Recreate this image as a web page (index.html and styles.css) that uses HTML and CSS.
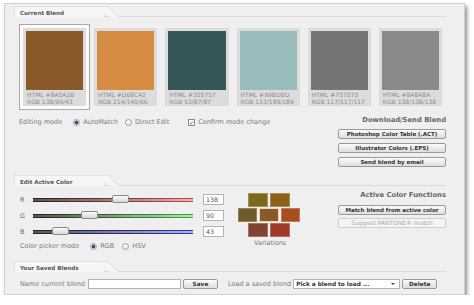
FILE: index.html
```html
<!DOCTYPE html>
<html lang="en">
<head>
    <meta charset="UTF-8">
    <title>Color Blender</title>
    <link rel="stylesheet" href="styles.css">
</head>
<body>
    <div class="panel">
        <section class="sec">
            <div class="tab-head"><span class="tab">Current Blend</span></div>
            <div class="swatches">
                <div class="card active"><div class="card-in"><div class="chip" style="background:#8A5A2B"></div><p>HTML #8A5A2B<br>RGB 138/90/43</p></div></div>
                <div class="card"><div class="card-in"><div class="chip" style="background:#D68C42"></div><p>HTML #D68C42<br>RGB 214/140/66</p></div></div>
                <div class="card"><div class="card-in"><div class="chip" style="background:#355757"></div><p>HTML #355757<br>RGB 53/87/87</p></div></div>
                <div class="card"><div class="card-in"><div class="chip" style="background:#99BDBD"></div><p>HTML #99BDBD<br>RGB 153/189/189</p></div></div>
                <div class="card"><div class="card-in"><div class="chip" style="background:#757575"></div><p>HTML #757575<br>RGB 117/117/117</p></div></div>
                <div class="card"><div class="card-in"><div class="chip" style="background:#8A8A8A"></div><p>HTML #8A8A8A<br>RGB 138/138/138</p></div></div>
            </div>
            <div class="mid">
                <div class="opt-row mode-row">
                    <span class="opt-label">Editing mode</span>
                    <label class="opt"><span class="radio on"></span>AutoMatch</label>
                    <label class="opt"><span class="radio"></span>Direct Edit</label>
                    <label class="opt confirm"><span class="check">&#10003;</span>Confirm mode change</label>
                </div>
                <div class="side">
                    <h4>Download/Send Blend</h4>
                    <button class="btn">Photoshop Color Table (.ACT)</button>
                    <button class="btn">Illustrator Colors (.EPS)</button>
                    <button class="btn">Send blend by email</button>
                </div>
            </div>
        </section>

        <section class="sec sec-edit">
            <div class="tab-head"><span class="tab">Edit Active Color</span></div>
            <div class="edit">
                <div class="sliders">
                    <div class="slider-row">
                        <span class="ch">R</span>
                        <div class="track track-r"><span class="thumb" style="left:79px"></span></div>
                        <input class="num" type="text" value="138">
                    </div>
                    <div class="slider-row">
                        <span class="ch">G</span>
                        <div class="track track-g"><span class="thumb" style="left:48px"></span></div>
                        <input class="num" type="text" value="90">
                    </div>
                    <div class="slider-row">
                        <span class="ch">B</span>
                        <div class="track track-b"><span class="thumb" style="left:19px"></span></div>
                        <input class="num" type="text" value="43">
                    </div>
                    <div class="opt-row picker-row">
                        <span class="opt-label">Color picker mode</span>
                        <label class="opt"><span class="radio on"></span>RGB</label>
                        <label class="opt"><span class="radio"></span>HSV</label>
                    </div>
                </div>
                <div class="variations">
                    <div class="var-row">
                        <span class="var" style="background:#7d6b1c"></span>
                        <span class="var" style="background:#8d631c"></span>
                    </div>
                    <div class="var-row">
                        <span class="var" style="background:#6f5a2a"></span>
                        <span class="var current" style="background:#8a5a2b"></span>
                        <span class="var" style="background:#a84d1f"></span>
                    </div>
                    <div class="var-row">
                        <span class="var" style="background:#7e4431"></span>
                        <span class="var" style="background:#9e3b28"></span>
                    </div>
                    <div class="var-label">Variations</div>
                </div>
                <div class="side side-edit">
                    <h4>Active Color Functions</h4>
                    <button class="btn">Match blend from active color</button>
                    <button class="btn" disabled>Suggest PANTONE&reg; match</button>
                </div>
            </div>
        </section>

        <section class="sec sec-saved">
            <div class="tab-head"><span class="tab">Your Saved Blends</span></div>
            <div class="saved-row">
                <span class="opt-label">Name current blend</span>
                <input class="name-input" type="text">
                <button class="btn btn-small">Save</button>
                <span class="opt-label load-label">Load a saved blend</span>
                <div class="pick">Pick a blend to load ...<span class="arrow"></span></div>
                <button class="btn btn-small">Delete</button>
            </div>
        </section>
    </div>
</body>
</html>
```

FILE: styles.css
```css
body {
    margin: 0;
    background-color: #ffffff;
    font-family: "DejaVu Sans", Verdana, sans-serif;
    font-size: 6.5px;
    color: #7a7a7a;
}
.panel {
    box-sizing: border-box;
    width: 461px;
    height: 292px;
    margin: 3px 0 0 4px;
    padding: 2px 18px 0 9px;
    background-color: #efefef;
    border: 1px solid #d2d2d2;
    box-shadow: 2px 3px 4px rgba(0, 0, 0, 0.45);
}

/* section tabs */
.tab-head {
    height: 10px;
    border-bottom: 1px solid #dadada;
}
.tab {
    position: relative;
    display: inline-block;
    box-sizing: border-box;
    width: 90px;
    height: 11px;
    padding: 3px 0 0 5px;
    background-color: #f6f6f6;
    border-top: 1px solid #e0e0e0;
    border-left: 1px solid #e4e4e4;
    font-size: 5.6px;
    font-weight: bold;
    line-height: 6px;
    color: #555;
}
.tab::after {
    content: "";
    position: absolute;
    left: 84px;
    top: -1px;
    width: 8px;
    height: 10px;
    background-color: #f6f6f6;
    border-top: 1px solid #e0e0e0;
    border-right: 1px solid #dadada;
    transform: skewX(45deg);
    transform-origin: top left;
}

/* current blend */
.swatches {
    display: flex;
    margin: 7px 0 0 5px;
}
.card {
    box-sizing: border-box;
    width: 72px;
    height: 86px;
    padding: 3px;
    border: 1px solid transparent;
}
.card.active {
    border-color: #a8a8a8;
    background-color: #fbfbfb;
}
.card-in {
    box-sizing: border-box;
    height: 100%;
    padding: 3px;
    background-color: #dcdcdc;
}
.chip {
    height: 59px;
}
.card-in p {
    margin: 1px 0 0 1px;
    font-size: 6px;
    line-height: 7px;
    color: #8c8c8c;
    white-space: nowrap;
}

.mid {
    display: flex;
    justify-content: space-between;
    height: 61px;
    margin-left: 5px;
}
.opt-row {
    display: flex;
    align-items: center;
    height: 8px;
    white-space: nowrap;
}
.mode-row {
    margin-top: 8px;
}
.opt {
    display: flex;
    align-items: center;
}
.opt-label {
    margin-right: 11px;
}
.mode-row .opt {
    margin-right: 7px;
}
.mode-row .confirm {
    margin-left: 12px;
}
.radio {
    box-sizing: border-box;
    width: 7px;
    height: 7px;
    margin-right: 3px;
    border: 1px solid #a0a0a0;
    border-radius: 50%;
    background: radial-gradient(circle at 40% 35%, #ffffff, #dcdcdc);
}
.radio.on {
    background: radial-gradient(circle, #2d4f74 0, #2d4f74 1.6px, #e8e8e8 2.2px);
}
.check {
    box-sizing: border-box;
    width: 7px;
    height: 7px;
    margin-right: 3px;
    border: 1px solid #888;
    background-color: #fff;
    font-size: 6px;
    line-height: 5px;
    text-align: center;
    color: #333;
}

.side {
    width: 108px;
}
.side h4 {
    margin: 6px 0 0 0;
    font-size: 6.8px;
    line-height: 9px;
    text-align: right;
    color: #666;
}
.btn {
    display: block;
    box-sizing: border-box;
    width: 108px;
    height: 10px;
    margin-top: 4px;
    padding: 0;
    border: 1px solid #9a9a9a;
    border-radius: 2px;
    background: linear-gradient(#fbfbfb, #dedede);
    font-family: "DejaVu Sans", Verdana, sans-serif;
    font-size: 5.5px;
    font-weight: bold;
    line-height: 8px;
    color: #333;
}
.btn:disabled {
    border-color: #cfcfcf;
    background: #f4f4f4;
    color: #aaa;
    font-weight: normal;
    font-size: 6px;
}

/* edit active color */
.sec-edit {
    margin-top: 4px;
}
.edit {
    display: flex;
    height: 65px;
    margin-left: 5px;
}
.sliders {
    width: 205px;
    padding-top: 8px;
}
.slider-row {
    display: flex;
    align-items: center;
    height: 11px;
    margin-bottom: 5px;
}
.ch {
    width: 14px;
    padding-left: 1px;
    box-sizing: border-box;
    color: #666;
}
.track {
    position: relative;
    box-sizing: border-box;
    width: 160px;
    height: 4px;
    border-top: 1px solid #222;
    border-bottom: 1px solid #222;
}
.track-r {
    background: linear-gradient(to right, #555, #f0b0b0);
    border-color: #333;
    border-image: linear-gradient(to right, #222, #c04848) 1;
}
.track-g {
    background: linear-gradient(to right, #555, #b0e8b0);
    border-image: linear-gradient(to right, #222, #3caa3c) 1;
}
.track-b {
    background: linear-gradient(to right, #555, #b0b0f0);
    border-image: linear-gradient(to right, #222, #3434a8) 1;
}
.thumb {
    position: absolute;
    top: -4px;
    box-sizing: border-box;
    width: 17px;
    height: 8px;
    border: 1px solid #8a8a8a;
    border-radius: 2px;
    background: linear-gradient(#fdfdfd, #d6d6d6);
}
.num {
    box-sizing: border-box;
    width: 21px;
    height: 11px;
    margin-left: 10px;
    padding: 0 0 0 2px;
    border: 1px solid #b4b4b4;
    background-color: #fff;
    font-family: "DejaVu Sans", Verdana, sans-serif;
    font-size: 6.3px;
    color: #555;
}
.picker-row {
    height: 10px;
    margin-top: -1px;
    padding-left: 1px;
}
.picker-row .opt {
    margin-right: 8px;
}

.variations {
    margin: 7px 0 0 14px;
    width: 62px;
}
.var-row {
    display: flex;
    justify-content: center;
    gap: 2px;
    margin-bottom: 1px;
}
.var {
    box-sizing: border-box;
    width: 20px;
    height: 14px;
    border: 1px solid rgba(255, 255, 255, 0.25);
}
.var.current {
    border-color: #e6d6b8;
}
.var-label {
    margin-top: 2px;
    padding-left: 16px;
    line-height: 8px;
}
.side-edit {
    margin-left: auto;
}
.side-edit h4 {
    margin-top: 5px;
}
.side-edit .btn {
    margin-top: 5px;
}
.side-edit .btn + .btn {
    margin-top: 3px;
}

/* saved blends */
.sec-saved {
    margin-top: 10px;
}
.saved-row {
    display: flex;
    align-items: center;
    height: 10px;
    margin: 7px 0 0 6px;
    white-space: nowrap;
}
.saved-row .opt-label {
    margin-right: 3px;
}
.name-input {
    box-sizing: border-box;
    width: 93px;
    height: 10px;
    margin: 0 2px 0 0;
    border: 1px solid #b4b4b4;
    background-color: #fff;
}
.btn-small {
    width: 35px;
    margin: 0;
    font-size: 5.8px;
}
.saved-row .load-label {
    margin: 0 2px 0 10px;
}
.pick {
    position: relative;
    box-sizing: border-box;
    width: 107px;
    height: 10px;
    margin-right: 2px;
    padding-left: 2px;
    border: 1px solid #b4b4b4;
    background-color: #fff;
    font-size: 5.8px;
    font-weight: bold;
    line-height: 8px;
    color: #333;
}
.arrow {
    position: absolute;
    right: 4px;
    top: 3px;
    border-left: 2px solid transparent;
    border-right: 2px solid transparent;
    border-top: 2px solid #444;
}
```
